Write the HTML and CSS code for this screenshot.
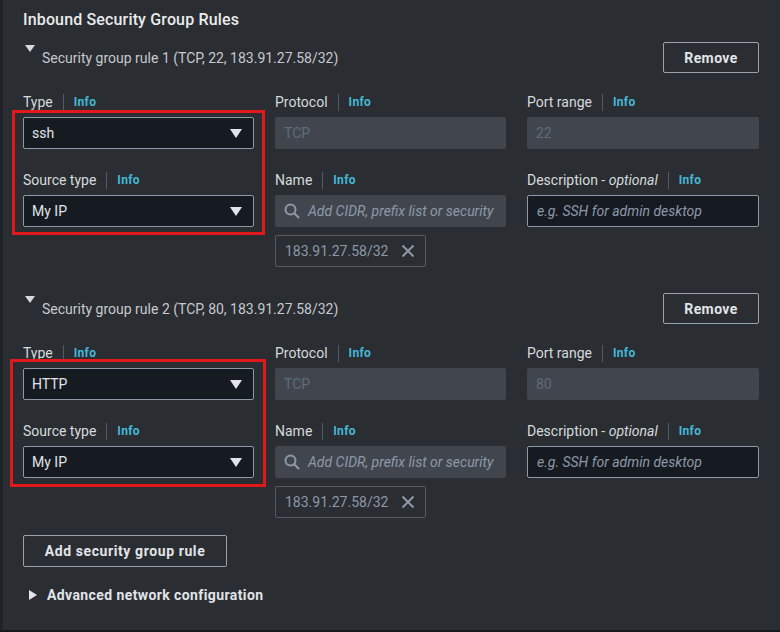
FILE: index.html
```html
<!DOCTYPE html>
<html lang="en">
<head>
<meta charset="utf-8">
<title>Inbound Security Group Rules</title>
<link rel="stylesheet" href="styles.css">
</head>
<body>
<div class="panel">
  <h2 class="title">Inbound Security Group Rules</h2>

  <section class="rule">
    <div class="rule-head">
      <div class="rule-toggle">
        <span class="caret-down"></span>
        <span class="rule-name">Security group rule 1 (TCP, 22, 183.91.27.58/32)</span>
      </div>
      <button class="btn">Remove</button>
    </div>
    <div class="grid">
      <div class="col col-hl">
        <div class="hl"></div>
        <div class="field">
          <div class="label"><span>Type</span><span class="sep"></span><span class="info">Info</span></div>
          <div class="select"><span>ssh</span><span class="arrow"></span></div>
        </div>
        <div class="field">
          <div class="label"><span>Source type</span><span class="sep"></span><span class="info">Info</span></div>
          <div class="select"><span>My IP</span><span class="arrow"></span></div>
        </div>
      </div>
      <div class="col">
        <div class="field">
          <div class="label"><span>Protocol</span><span class="sep"></span><span class="info">Info</span></div>
          <div class="input disabled">TCP</div>
        </div>
        <div class="field">
          <div class="label"><span>Name</span><span class="sep"></span><span class="info">Info</span></div>
          <div class="input search">
            <svg class="mag" width="16" height="16" viewBox="0 0 16 16"><circle cx="6.5" cy="6.5" r="5" fill="none" stroke="#8d99a8" stroke-width="2"/><path d="M10.2 10.2L14.5 14.5" stroke="#8d99a8" stroke-width="2" stroke-linecap="round"/></svg>
            <span class="ph">Add CIDR, prefix list or security</span>
          </div>
          <div class="token"><span>183.91.27.58/32</span>
            <svg width="14" height="14" viewBox="0 0 14 14"><path d="M1.5 1.5L12.5 12.5M12.5 1.5L1.5 12.5" stroke="#8d99a8" stroke-width="2"/></svg>
          </div>
        </div>
      </div>
      <div class="col">
        <div class="field">
          <div class="label"><span>Port range</span><span class="sep"></span><span class="info">Info</span></div>
          <div class="input disabled">22</div>
        </div>
        <div class="field">
          <div class="label"><span>Description - <i>optional</i></span><span class="sep"></span><span class="info">Info</span></div>
          <div class="input text"><span class="ph">e.g. SSH for admin desktop</span></div>
        </div>
      </div>
    </div>
  </section>

  <section class="rule rule-2">
    <div class="rule-head">
      <div class="rule-toggle">
        <span class="caret-down"></span>
        <span class="rule-name">Security group rule 2 (TCP, 80, 183.91.27.58/32)</span>
      </div>
      <button class="btn">Remove</button>
    </div>
    <div class="grid">
      <div class="col col-hl">
        <div class="hl hl-2"></div>
        <div class="field">
          <div class="label"><span>Type</span><span class="sep"></span><span class="info">Info</span></div>
          <div class="select"><span>HTTP</span><span class="arrow"></span></div>
        </div>
        <div class="field">
          <div class="label"><span>Source type</span><span class="sep"></span><span class="info">Info</span></div>
          <div class="select"><span>My IP</span><span class="arrow"></span></div>
        </div>
      </div>
      <div class="col">
        <div class="field">
          <div class="label"><span>Protocol</span><span class="sep"></span><span class="info">Info</span></div>
          <div class="input disabled">TCP</div>
        </div>
        <div class="field">
          <div class="label"><span>Name</span><span class="sep"></span><span class="info">Info</span></div>
          <div class="input search">
            <svg class="mag" width="16" height="16" viewBox="0 0 16 16"><circle cx="6.5" cy="6.5" r="5" fill="none" stroke="#8d99a8" stroke-width="2"/><path d="M10.2 10.2L14.5 14.5" stroke="#8d99a8" stroke-width="2" stroke-linecap="round"/></svg>
            <span class="ph">Add CIDR, prefix list or security</span>
          </div>
          <div class="token"><span>183.91.27.58/32</span>
            <svg width="14" height="14" viewBox="0 0 14 14"><path d="M1.5 1.5L12.5 12.5M12.5 1.5L1.5 12.5" stroke="#8d99a8" stroke-width="2"/></svg>
          </div>
        </div>
      </div>
      <div class="col">
        <div class="field">
          <div class="label"><span>Port range</span><span class="sep"></span><span class="info">Info</span></div>
          <div class="input disabled">80</div>
        </div>
        <div class="field">
          <div class="label"><span>Description - <i>optional</i></span><span class="sep"></span><span class="info">Info</span></div>
          <div class="input text"><span class="ph">e.g. SSH for admin desktop</span></div>
        </div>
      </div>
    </div>
  </section>

  <button class="btn add">Add security group rule</button>

  <div class="advanced"><span class="caret-right"></span><span>Advanced network configuration</span></div>
</div>
</body>
</html>
```

FILE: styles.css
```css
* { box-sizing: border-box; }
html, body { margin: 0; padding: 0; background: #15181d; }
body {
  font-family: Roboto, "Open Sans", "Liberation Sans", sans-serif;
  color: #d5dbdb;
  font-size: 14px;
}
.panel {
  width: 780px;
  height: 630px;
  background: #2a2d32;
  border-left: 3px solid #1f2227;
  padding: 10px 21px 0 20px;
}
.title {
  margin: 0;
  font-size: 16px;
  line-height: 20px;
  font-weight: 500;
  letter-spacing: 0.15px;
  color: #e9ebed;
}
.rule { margin-top: 12px; }
.rule-2 { margin-top: 26px; }
.rule-head {
  display: flex;
  justify-content: space-between;
  align-items: center;
  height: 31px;
}
.rule-toggle { display: flex; align-items: center; height: 31px; }
.caret-down {
  width: 0; height: 0;
  border-left: 5px solid transparent;
  border-right: 5px solid transparent;
  border-top: 7px solid #d5dbdb;
  margin: 3px 7px 0 2px;
  align-self: flex-start;
}
.rule-name { color: #c6c9cf; font-size: 14px; line-height: 20px; }
.btn {
  font-family: inherit;
  background: transparent;
  border: 1px solid #9aa3ad;
  border-radius: 2px;
  color: #e1e4e8;
  font-weight: 700;
  font-size: 14px;
  letter-spacing: 0.4px;
  height: 31px;
  padding: 0;
  width: 96px;
}
.grid {
  margin-top: 19px;
  display: grid;
  grid-template-columns: 231px 231px 232px;
  column-gap: 21px;
}
.col { display: flex; flex-direction: column; gap: 21px; }
.col-hl { position: relative; }
.hl {
  position: absolute;
  left: -11px; top: 18px;
  width: 253px; height: 125px;
  border: 3px solid #e2191c;
}
.hl-2 { left: -13px; top: 16px; width: 256px; height: 128px; }
.field { display: flex; flex-direction: column; }
.label {
  display: flex;
  align-items: center;
  height: 20px;
  margin-bottom: 5px;
  font-size: 14px;
  color: #d5dbdb;
}
.label i { font-style: italic; }
.sep {
  width: 1px; height: 17px;
  background: #545b64;
  margin: 0 10px;
}
.info { color: #44b9d6; font-weight: 700; font-size: 12px; letter-spacing: 0.3px; }
.select, .input {
  height: 32px;
  border-radius: 2px;
  display: flex;
  align-items: center;
  font-size: 14px;
}
.select {
  background: #161b22;
  border: 1px solid #8d99a8;
  padding: 0 11px 0 8px;
  justify-content: space-between;
  color: #e1e4e8;
}
.arrow {
  width: 0; height: 0;
  border-left: 6px solid transparent;
  border-right: 6px solid transparent;
  border-top: 9px solid #e1e4e8;
}
.input.disabled {
  background: #41464e;
  color: #5f6b7a;
  padding-left: 9px;
}
.input.search {
  background: #41464e;
  padding-left: 9px;
  white-space: nowrap;
}
.mag { flex: none; margin-right: 8px; }
.ph { color: #8d99a8; font-style: italic; }
.input.text {
  background: #161b22;
  border: 1px solid #8d99a8;
  padding-left: 9px;
}
.token {
  margin-top: 8px;
  width: 151px;
  height: 32px;
  border: 1px solid #545b64;
  border-radius: 2px;
  display: flex;
  align-items: center;
  justify-content: space-between;
  padding: 0 10px 0 9px;
  color: #8d99a8;
}
.add { margin-top: 17px; width: 204px; height: 32px; display: block; letter-spacing: 0.6px; }
.advanced {
  margin-top: 18px;
  display: flex;
  align-items: center;
  height: 20px;
  font-weight: 700;
  font-size: 14px;
  letter-spacing: 0.4px;
  color: #e1e4e8;
}
.caret-right {
  width: 0; height: 0;
  border-top: 5px solid transparent;
  border-bottom: 5px solid transparent;
  border-left: 8px solid #e1e4e8;
  margin: 0 10px 0 6px;
}
```
